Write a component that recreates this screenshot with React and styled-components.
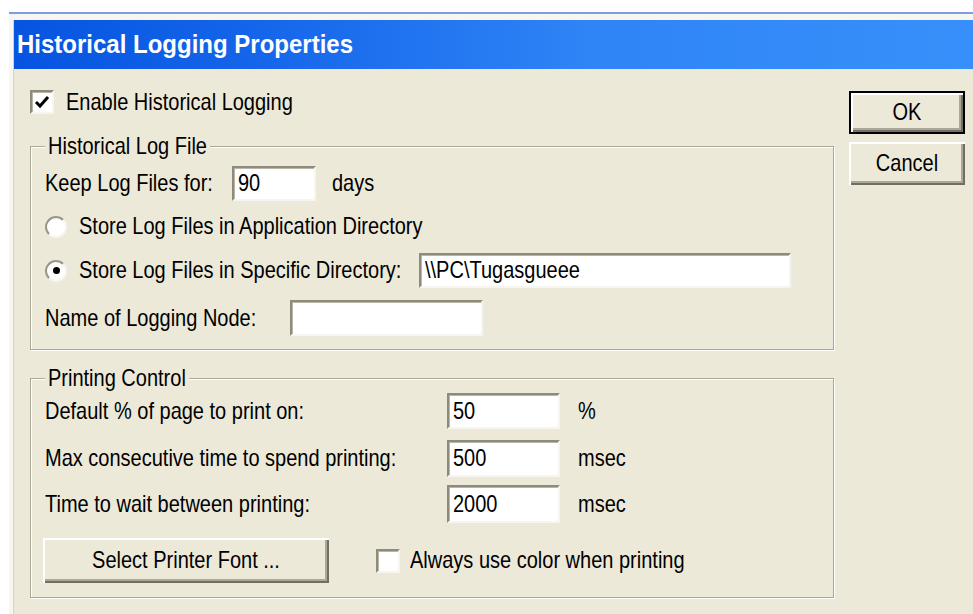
import React from "react";
import styled, { createGlobalStyle, css } from "styled-components";

// Global
const GlobalStyle = createGlobalStyle`
    html, body {
        margin: 0;
        background: #ffffff;
        overflow: hidden;
    }
    body {
        font-family: "Liberation Sans", Arial, sans-serif;
        font-size: 20px;
        color: #000;
    }
`;

// Text is drawn a little taller than the face's own proportions
const Text = styled.span`
    display: inline-block;
    white-space: pre;
    transform: scaleY(${(p) => p.$stretch || 1.2});
`;

const sunken = css`
    box-sizing: border-box;
    background: #ffffff;
    border: 2px solid;
    border-color: #8e8b7d #f6f5ef #f6f5ef #8e8b7d;
    box-shadow: inset 1px 1px 0 #b9b6a7;
`;

const raised = css`
    box-sizing: border-box;
    background: #ece9d8;
    box-shadow: inset 2px 2px 0 #ffffff, inset -2px -2px 0 #716f64, inset -4px -4px 0 #aca899;
`;

// Window chrome
const Frame = styled.div`
    margin: 12px 0 0 9px;
    height: 602px;
    box-sizing: border-box;
    border-top: 2px solid #7f9ee2;
    padding: 6px 0 0 4px;
    background: #f7f6f0;
`;

const Inner = styled.div`
    height: 100%;
    border-left: 1px solid #d8d4c4;
    display: flex;
    flex-direction: column;
`;

const TitleBar = styled.div`
    height: 49px;
    flex: none;
    display: flex;
    align-items: center;
    padding-left: 3px;
    background: linear-gradient(to right, #0654e0 0%, #1565ea 25%, #2f84f6 60%, #3790fa 100%);
    color: #ffffff;
    font-weight: bold;
    font-size: 24px;
`;

const Body = styled.div`
    flex: 1;
    display: flex;
    align-items: flex-start;
    background: #ece9d8;
`;

const Main = styled.div`
    width: 820px;
    box-sizing: border-box;
    padding: 21px 0 0 16px;
    display: flex;
    flex-direction: column;
`;

const Side = styled.div`
    margin-left: 15px;
    padding-top: 22px;
    display: flex;
    flex-direction: column;
    gap: 8px;
`;

// Controls
const Button = styled.div`
    ${raised};
    width: ${(p) => p.$width || 116}px;
    height: ${(p) => p.$height || 43}px;
    display: flex;
    align-items: center;
    justify-content: center;
    ${(p) =>
        p.$default &&
        css`
            border: 2px solid #000;
        `}
    margin-left: ${(p) => p.$shift || 0}px;
`;

const CheckBox = styled.span`
    ${sunken};
    width: 24px;
    height: 24px;
    flex: none;
    display: flex;
    align-items: center;
    justify-content: center;
`;

const Radio = styled.span`
    box-sizing: border-box;
    width: 22px;
    height: 22px;
    flex: none;
    border-radius: 50%;
    background: #ffffff;
    border: 2px solid;
    border-color: #9a9789 #f7f6f1 #f7f6f1 #9a9789;
    display: flex;
    align-items: center;
    justify-content: center;
    &::after {
        content: "";
        width: 7px;
        height: 7px;
        border-radius: 50%;
        background: ${(p) => (p.$checked ? "#000" : "transparent")};
    }
`;

const Field = styled.div`
    ${sunken};
    width: ${(p) => p.$width}px;
    height: ${(p) => p.$height || 36}px;
    flex: none;
    display: flex;
    align-items: center;
    padding-left: 4px;
    overflow: hidden;
`;

const Row = styled.div`
    height: ${(p) => p.$height}px;
    display: flex;
    align-items: center;
    gap: ${(p) => p.$gap || 0}px;
`;

const Label = styled.div`
    width: ${(p) => p.$width}px;
    flex: none;
`;

const Unit = styled.div`
    margin-left: ${(p) => p.$gap || 16}px;
`;

// Group boxes
const Group = styled.fieldset`
    margin: ${(p) => p.$top}px 0 0 0;
    padding: ${(p) => p.$pad};
    border: 1px solid #aca899;
    box-shadow: 1px 1px 0 #ffffff, inset 1px 1px 0 #ffffff;
    min-width: 0;
`;

const Legend = styled.legend`
    padding: 0 3px;
    line-height: 20px;
    height: 20px;
    background: #ece9d8;
`;

const PrintGrid = styled.div`
    display: grid;
    grid-template-columns: 402px 113px auto;
    grid-template-rows: 46px 48px 44px;
    align-items: center;
`;

const FooterRow = styled.div`
    height: 57px;
    display: flex;
    align-items: flex-end;
`;

const ColorOption = styled.div`
    height: 45px;
    margin-left: 47px;
    display: flex;
    align-items: center;
    gap: 10px;
`;

const Tick = () => (
    <svg width="16" height="16" viewBox="0 0 16 16">
        <polyline points="2,8 6,12 14,3" fill="none" stroke="#000" strokeWidth="3" />
    </svg>
);

const printRows = [
    { label: "Default % of page to print on:", value: "50", unit: "%", height: 36 },
    { label: "Max consecutive time to spend printing:", value: "500", unit: "msec", height: 37 },
    { label: "Time to wait between printing:", value: "2000", unit: "msec", height: 38 },
];

const App = () => {
    return (
        <>
            <GlobalStyle />
            <Frame>
                <Inner>
                    <TitleBar>
                        <Text $stretch={1.05}>Historical Logging Properties</Text>
                    </TitleBar>
                    <Body>
                        <Main>
                            <Row $height={24} $gap={12}>
                                <CheckBox>
                                    <Tick />
                                </CheckBox>
                                <Text>Enable Historical Logging</Text>
                            </Row>

                            <Group $top={22} $pad="7px 0 5px 14px">
                                <Legend>
                                    <Text>Historical Log File</Text>
                                </Legend>
                                <Row $height={41}>
                                    <Label $width={187}>
                                        <Text>Keep Log Files for:</Text>
                                    </Label>
                                    <Field $width={84} $height={35}>
                                        <Text>90</Text>
                                    </Field>
                                    <Unit $gap={16}>
                                        <Text>days</Text>
                                    </Unit>
                                </Row>
                                <Row $height={45} $gap={12}>
                                    <Radio />
                                    <Text>Store Log Files in Application Directory</Text>
                                </Row>
                                <Row $height={43} $gap={12}>
                                    <Radio $checked />
                                    <Label $width={328}>
                                        <Text>Store Log Files in Specific Directory:</Text>
                                    </Label>
                                    <Field $width={372} $height={35}>
                                        <Text>\\PC\Tugasgueee</Text>
                                    </Field>
                                </Row>
                                <Row $height={52}>
                                    <Label $width={245}>
                                        <Text>Name of Logging Node:</Text>
                                    </Label>
                                    <Field $width={193} $height={36} />
                                </Row>
                            </Group>

                            <Group $top={18} $pad="0 0 14px 14px">
                                <Legend>
                                    <Text>Printing Control</Text>
                                </Legend>
                                <PrintGrid>
                                    {printRows.map((r) => (
                                        <React.Fragment key={r.label}>
                                            <Text>{r.label}</Text>
                                            <Field $width={113} $height={r.height}>
                                                <Text>{r.value}</Text>
                                            </Field>
                                            <Unit $gap={18}>
                                                <Text>{r.unit}</Text>
                                            </Unit>
                                        </React.Fragment>
                                    ))}
                                </PrintGrid>
                                <FooterRow>
                                    <Button $width={286} $height={45} $shift={-2}>
                                        <Text>Select Printer Font ...</Text>
                                    </Button>
                                    <ColorOption>
                                        <CheckBox />
                                        <Text>Always use color when printing</Text>
                                    </ColorOption>
                                </FooterRow>
                            </Group>
                        </Main>
                        <Side>
                            <Button $default>
                                <Text>OK</Text>
                            </Button>
                            <Button>
                                <Text>Cancel</Text>
                            </Button>
                        </Side>
                    </Body>
                </Inner>
            </Frame>
        </>
    );
};

export default App;
